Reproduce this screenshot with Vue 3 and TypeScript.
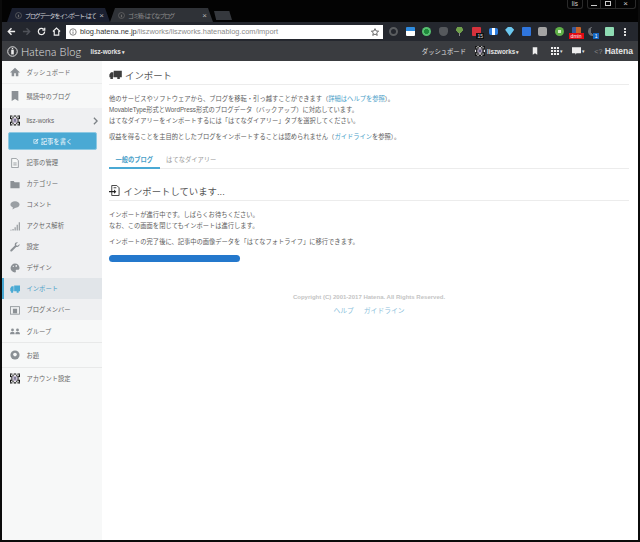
<script setup lang="ts">
const tabs = [
  { title: 'ブログデータをインポート - はて', active: true },
  { title: 'ゴミ箱 - はてなブログ', active: false }
]

const extensions = [
  'ext-sync',
  'ext-blue',
  'ext-green',
  'ext-pocket',
  'ext-tree',
  'ext-red',
  'ext-tag',
  'ext-gem',
  'ext-chart',
  'ext-silver',
  'ext-lime',
  'ext-fox',
  'ext-moon',
  'ext-mint'
]

const blogMenu = [
  { label: '記事の管理', icon: 'doc' },
  { label: 'カテゴリー', icon: 'folder' },
  { label: 'コメント', icon: 'comment' },
  { label: 'アクセス解析', icon: 'bars' },
  { label: '設定', icon: 'wrench' },
  { label: 'デザイン', icon: 'palette' },
  { label: 'インポート', icon: 'truck', active: true },
  { label: 'ブログメンバー', icon: 'member' }
]

// 8x8 pixel art used for the user's avatar
const avatarRows = ['00100100', '01011010', '00233200', '10344301', '10344301', '00233200', '01011010', '00100100']
const avatarColors = ['#141414', '#e8e8e8', '#8a8a8a', '#c9b8d8', '#5a5a7a']
const avatarCells = avatarRows.flatMap((row, y) =>
  row.split('').map((c, x) => ({ x, y, fill: avatarColors[Number(c)] }))
)
</script>

<template>
  <div class="window">
    <svg class="defs">
      <symbol id="avatar" viewBox="0 0 8 8">
        <rect v-for="c in avatarCells" :key="`${c.x}-${c.y}`" :x="c.x" :y="c.y" width="1" height="1" :fill="c.fill" />
      </symbol>
    </svg>

    <div class="tabstrip">
      <div v-for="tab in tabs" :key="tab.title" class="tab" :class="{ active: tab.active }">
        <svg class="tab-favicon" viewBox="0 0 8 8"><circle cx="4" cy="4" r="3.400" fill="none" stroke="#6a6a6a" stroke-width=".8" /><rect x="3.300" y="3" width="1.400" height="3" fill="#6a6a6a" /></svg>
        <span class="tab-title">{{ tab.title }}</span>
        <span class="tab-close">×</span>
      </div>
      <div class="tab-new"></div>
      <div class="win-controls">
        <span class="win-user">lis</span>
        <span class="win-buttons">
          <i class="min"></i>
          <i class="max"></i>
          <i class="close">×</i>
        </span>
      </div>
    </div>

    <div class="toolbar">
      <svg class="nav" viewBox="0 0 10 10"><path d="M9 5H2M5 1.500 1.500 5 5 8.500" fill="none" stroke="#eee" stroke-width="1.600" /></svg>
      <svg class="nav" viewBox="0 0 10 10"><path d="M1 5h7M5 1.500 8.500 5 5 8.500" fill="none" stroke="#50535a" stroke-width="1.600" /></svg>
      <svg class="nav" viewBox="0 0 10 10"><path d="M8.500 5A3.500 3.500 0 1 1 7.400 2.400M8.600 .8v2.600H6" fill="none" stroke="#eee" stroke-width="1.400" /></svg>
      <svg class="nav" viewBox="0 0 10 10"><path d="M1 5 5 1.200 9 5M2.500 4.500V9h5V4.500" fill="none" stroke="#eee" stroke-width="1.300" /></svg>
      <div class="omnibox">
        <svg class="info" viewBox="0 0 10 10"><circle cx="5" cy="5" r="4" fill="none" stroke="#666" /><path d="M5 4.300v3M5 2.500v1" stroke="#666" /></svg>
        <span class="host">blog.hatena.ne.jp</span><span class="path">/liszworks/liszworks.hatenablog.com/import</span>
        <svg class="star" viewBox="0 0 10 10"><path d="M5 .8 6.300 3.700 9.500 4 7.100 6.100 7.800 9.200 5 7.600 2.200 9.200 2.900 6.100.5 4 3.700 3.700z" fill="none" stroke="#444" /></svg>
      </div>
      <div class="extensions">
        <span v-for="ext in extensions" :key="ext" class="ext" :class="ext">
          <b v-if="ext === 'ext-red'">15</b>
          <em v-if="ext === 'ext-fox'">dmin</em>
          <u v-if="ext === 'ext-moon'">1</u>
        </span>
      </div>
      <span class="kebab"></span>
    </div>

    <header class="hatena-bar">
      <div class="brand">
        <svg class="brand-mark" viewBox="0 0 12 12"><circle cx="6" cy="6" r="5.200" fill="none" stroke="#eee" stroke-width="1" /><rect x="4.600" y="4" width="2.800" height="5.200" fill="#eee" /><circle cx="6" cy="2.800" r=".8" fill="#eee" /></svg>
        <span class="brand-name">Hatena Blog</span>
      </div>
      <span class="blog-select">lisz-works<span class="caret">▾</span></span>
      <div class="bar-right">
        <span class="bar-link">ダッシュボード</span>
        <svg class="avatar small"><use href="#avatar" /></svg>
        <span class="bar-user">liszworks<span class="caret">▾</span></span>
        <svg class="bar-icon mark" viewBox="0 0 8 10"><path d="M1 0h6v10L4 8 1 10z" fill="#eee" /></svg>
        <svg class="bar-icon grid" viewBox="0 0 10 10"><path d="M0 0h2.600v2.600H0zM3.700 0h2.600v2.600H3.700zM7.400 0H10v2.600H7.400zM0 3.700h2.600v2.600H0zM3.700 3.700h2.600v2.600H3.700zM7.400 3.700H10v2.600H7.400zM0 7.400h2.600V10H0zM3.700 7.400h2.600V10H3.700zM7.400 7.400H10V10H7.400z" fill="#eee" /></svg>
        <span class="caret">▾</span>
        <svg class="bar-icon chat" viewBox="0 0 12 10"><path d="M0 0h12v8H6L4.500 10V8H0z" fill="#eee" /></svg>
        <span class="caret">▾</span>
        <span class="hatena-word"><small>&lt;?</small> Hatena</span>
      </div>
    </header>

    <div class="body">
      <aside class="sidebar">
        <a class="side-row top">
          <svg class="side-icon" viewBox="0 0 12 12"><path d="M6 1 0 6.500h2V11h3V7.500h2V11h3V6.500h2z" fill="#8b9095" /></svg>
          ダッシュボード
        </a>
        <a class="side-row top reading">
          <svg class="side-icon" viewBox="0 0 12 12"><path d="M2 0h8v12L6 9.600 2 12z" fill="#8b9095" /></svg>
          購読中のブログ
        </a>
        <section class="blog-section">
          <div class="blog-head">
            <svg class="avatar"><use href="#avatar" /></svg>
            <span>lisz-works</span>
            <svg class="chev" viewBox="0 0 6 10"><path d="M1 1l4 4-4 4" fill="none" stroke="#7b8085" stroke-width="1.600" /></svg>
          </div>
          <button class="write-btn">
            <svg viewBox="0 0 10 10"><path d="M1 2h5v1H2v5h5V6h1v3H1zM4 5.500 8.200 1.300l1 1L5 6.500H4z" fill="#fff" /></svg>
            記事を書く
          </button>
          <a v-for="item in blogMenu" :key="item.label" class="side-row" :class="{ active: item.active }">
            <svg class="side-icon" viewBox="0 0 12 12">
              <template v-if="item.icon === 'doc'"><path d="M2 .5h5.500L10 3.200v8.300H2z" fill="#f7f8f8" stroke="#8b9095" /><path d="M4 6h4M4 8.300h4" stroke="#8b9095" /></template>
              <path v-else-if="item.icon === 'folder'" d="M.5 2.500h4l1 1.500h6v7H.5z" fill="#8b9095" />
              <path v-else-if="item.icon === 'comment'" d="M6 1.500c3 0 5.500 1.700 5.500 4s-2.500 4-5.500 4l-3 2 .5-2.600C1.700 8.300.5 7 .5 5.500c0-2.300 2.500-4 5.500-4z" fill="#9a9fa4" />
              <path v-else-if="item.icon === 'bars'" d="M.5 10.500h1.300v1H.5zM3 9.500h1.300v2H3zM5.500 7.500h1.300v4H5.500zM8 4.500h1.300v7H8zM10.500 1.500h1.300v10h-1.300z" fill="#8b9095" />
              <path v-else-if="item.icon === 'wrench'" d="M11.500 2.500 9.300 4.600 7.600 4.200 7.300 2.500 9.400.6C7.700 0 5.800 1.200 5.700 3c0 .5.100.900.200 1.300L.7 9.300c-.6.600-.6 1.300-.1 1.800s1.200.5 1.800 0l5-5.200c2.200.700 4.500-1 4.100-3.400z" fill="#8b9095" />
              <template v-else-if="item.icon === 'palette'"><path d="M6 .7a5.300 5.300 0 1 0 0 10.600c1 0 1.300-.7 1-1.400-.4-.9.100-1.700 1-1.700h1.500c1.200 0 1.900-.8 1.900-2.200C11.400 3 9 .7 6 .7z" fill="#8b9095" /><circle cx="7.500" cy="3.500" r="1" fill="#eff0f2" /><circle cx="4" cy="4" r=".8" fill="#eff0f2" /></template>
              <path v-else-if="item.icon === 'truck'" d="M.3 5 2 2.800h2.400V8.800H.3zM5 1.800h7V8.800H5zM1.300 8.800h2.400v1.700H1.300zM8 8.800h2.400v1.700H8z" fill="#4aaad4" />
              <template v-else><rect x=".5" y="2" width="11" height="9" fill="none" stroke="#8b9095" /><rect x="3.500" y="4.500" width="5" height="5.500" fill="#8b9095" /></template>
            </svg>
            {{ item.label }}
          </a>
        </section>
        <a class="side-row group">
          <svg class="side-icon" viewBox="0 0 12 12"><path d="M3 3a1.700 1.700 0 1 1 0 3.400A1.700 1.700 0 0 1 3 3zM9 3a1.700 1.700 0 1 1 0 3.400A1.700 1.700 0 0 1 9 3zM0 10c0-2 1-3 3-3s2.600 1 2.600 3zM6.400 10c0-2 .6-3 2.600-3s3 1 3 3z" fill="#8b9095" /></svg>
          グループ
        </a>
        <a class="side-row odai">
          <svg class="side-icon" viewBox="0 0 12 12"><circle cx="6" cy="6" r="5.500" fill="#8b9095" /><circle cx="6" cy="5.500" r="2.200" fill="#f7f8f8" /></svg>
          お題
        </a>
        <a class="side-row account">
          <svg class="avatar"><use href="#avatar" /></svg>
          アカウント設定
        </a>
      </aside>

      <main class="content">
        <h1 class="page-title">
          <svg viewBox="0 0 14 10"><path d="M.2 5 2 2.600h2.600V8H.2zM5 .7h9V8H5zM1.300 8h2.800v2H1.300zM9 8h2.800v2H9z" fill="#3d3d3d" /></svg>
          インポート
        </h1>
        <p class="intro first">
          他のサービスやソフトウェアから、ブログを移転・引っ越すことができます（<a>詳細はヘルプを参照</a>）。<br />
          MovableType形式とWordPress形式のブログデータ（バックアップ）に対応しています。<br />
          はてなダイアリーをインポートするには「はてなダイアリー」タブを選択してください。
        </p>
        <p class="intro second">収益を得ることを主目的としたブログをインポートすることは認められません（<a>ガイドライン</a>を参照）。</p>
        <nav class="tabs">
          <span class="tab-item current">一般のブログ</span>
          <span class="tab-item">はてなダイアリー</span>
        </nav>
        <h2 class="section-title">
          <svg viewBox="0 0 12 12"><path d="M3 .5h5.500L11 3v8.500H3z" fill="#fff" stroke="#333" /><path d="M0 6.500h5.500V5L8 7.300 5.500 9.500V8H0z" fill="#222" /><path d="M5 3h3" stroke="#333" /></svg>
          インポートしています...
        </h2>
        <p class="intro status">
          インポートが進行中です。しばらくお待ちください。<br />
          なお、この画面を閉じてもインポートは進行します。
        </p>
        <p class="intro second">インポートの完了後に、記事中の画像データを「はてなフォトライフ」に移行できます。</p>
        <div class="progress"></div>
        <footer class="page-footer">
          <div class="copyright">Copyright (C) 2001-2017 Hatena. All Rights Reserved.</div>
          <div class="footer-links"><a>ヘルプ</a><a>ガイドライン</a></div>
        </footer>
      </main>
    </div>
  </div>
</template>

<style>
html, body {
  margin: 0;
  background: #000;
}
</style>

<style scoped>
.window {
  width: 640px;
  height: 542px;
  box-sizing: border-box;
  border: solid #0b0b0b;
  border-width: 0 2px 2px;
  background: #030303;
  display: flex;
  flex-direction: column;
  overflow: hidden;
  font-family: "Liberation Sans", "Noto Sans CJK JP", sans-serif;
  color: #555;
}

.defs {
  position: absolute;
  width: 0;
  height: 0;
}

.tabstrip {
  height: 22px;
  flex: none;
  padding: 8px 0 0 5px;
  box-sizing: border-box;
  display: flex;
  position: relative;
}

.tab {
  width: 103px;
  height: 14px;
  padding: 0 3px 0 8px;
  box-sizing: border-box;
  display: flex;
  align-items: center;
  gap: 3px;
  clip-path: polygon(0 100%, 5px 0, calc(100% - 5px) 0, 100% 100%);
  background: #2f3237;
  color: #8e8e8e;
  font-size: 6px;
}

.tab.active {
  background: #1b2030;
  color: #d0d0d6;
}

.tab-favicon {
  width: 7px;
  height: 7px;
  flex: none;
}

.tab-title {
  flex: 1;
  white-space: nowrap;
  letter-spacing: -1.100px;
}

.tab-close {
  font-size: 8px;
  color: #b5b5b5;
  margin-right: 3px;
}

.tab-new {
  width: 18px;
  height: 9px;
  margin: 3px 0 0 1px;
  background: #35383d;
  clip-path: polygon(0 0, 85% 0, 100% 100%, 12% 100%);
}

.win-controls {
  position: absolute;
  top: 0;
  right: 2px;
  display: flex;
  gap: 4px;
  height: 9px;
  font-size: 6.500px;
  color: #ccc;
}

.win-user {
  padding: 0 4px;
  border: 1px solid #2a2a2a;
  border-top: 0;
  border-radius: 0 0 3px 3px;
}

.win-buttons {
  display: flex;
  border: 1px solid #2a2a2a;
  border-top: 0;
  border-radius: 0 0 3px 3px;
}

.win-buttons i {
  display: block;
  position: relative;
  font-style: normal;
  text-align: center;
  line-height: 7px;
}

.win-buttons .min {
  width: 12px;
  border-right: 1px solid #2a2a2a;
}

.win-buttons .min::after {
  content: "";
  position: absolute;
  left: 3px;
  top: 5px;
  width: 6px;
  height: 1px;
  background: #ccc;
}

.win-buttons .max {
  width: 14px;
  border-right: 1px solid #2a2a2a;
}

.win-buttons .max::after {
  content: "";
  position: absolute;
  left: 4px;
  top: 1px;
  width: 4px;
  height: 3px;
  border: 1px solid #ccc;
}

.win-buttons .close {
  width: 19px;
  font-size: 8px;
}

.toolbar {
  height: 19px;
  flex: none;
  display: flex;
  align-items: center;
  padding-left: 5px;
  background: #24272e;
}

.nav {
  width: 9px;
  height: 9px;
  margin-right: 6px;
  flex: none;
}

.omnibox {
  width: 317px;
  height: 14px;
  margin-left: -1px;
  flex: none;
  display: flex;
  align-items: center;
  background: #fff;
  font-size: 7.400px;
  color: #8a8a8a;
  white-space: nowrap;
}

.info {
  width: 8px;
  height: 8px;
  margin: 0 3px 0 3px;
}

.host {
  color: #333;
}

.star {
  width: 8px;
  height: 8px;
  margin-left: auto;
  margin-right: 4px;
}

.extensions {
  display: flex;
  gap: 7.600px;
  margin-left: 6px;
}

.ext {
  width: 9px;
  height: 9px;
  position: relative;
  border-radius: 1px;
  box-sizing: border-box;
}

.ext b {
  position: absolute;
  right: -3px;
  bottom: -3px;
  padding: 0 1px;
  background: #111;
  color: #ddd;
  font-size: 5px;
  font-weight: 400;
  line-height: 6px;
}

.ext em {
  position: absolute;
  left: -3px;
  bottom: -3px;
  width: 15px;
  background: #e20a13;
  color: #fff;
  font-size: 5px;
  font-style: normal;
  line-height: 6px;
  text-align: center;
}

.ext u {
  position: absolute;
  right: -2px;
  bottom: -3px;
  width: 6px;
  background: #1567c2;
  color: #fff;
  font-size: 5px;
  text-decoration: none;
  line-height: 6px;
  text-align: center;
}

.ext-sync { border: 2px solid #5a5d60; border-radius: 50%; }
.ext-blue { background: linear-gradient(#2f8ce0 50%, #fff 50%); }
.ext-green { background: radial-gradient(circle, #1f8a3c 35%, #56c070 40%); border-radius: 50%; }
.ext-pocket { background: #55585c; border-radius: 3px 3px 5px 5px; }
.ext-tree { background: radial-gradient(circle at 50% 30%, #6fa04c 40%, transparent 45%), linear-gradient(90deg, transparent 40%, #888 40% 60%, transparent 60%); }
.ext-red { background: #d5323c; }
.ext-tag { background: linear-gradient(90deg, #2f7fe0 35%, #fff 35% 65%, #2f7fe0 65%); border-radius: 2px; height: 7px; margin-top: 1px; }
.ext-gem { background: #6cc8f0; clip-path: polygon(0 30%, 30% 0, 70% 0, 100% 30%, 50% 100%); }
.ext-chart { background: #2f75dd; }
.ext-silver { background: #a3a3a3; border-radius: 2px; }
.ext-lime { background: radial-gradient(circle, #d8f0c8 25%, #5fb048 30%); border-radius: 50%; }
.ext-fox { background: linear-gradient(90deg, #3a5a9a 50%, #c8632a 50%); clip-path: none; }
.ext-moon { background: radial-gradient(circle at 75% 40%, #24272e 45%, #6a6d72 48%); border-radius: 50%; }
.ext-mint { background: #8fdcb4; }

.kebab {
  width: 2px;
  height: 2px;
  margin-left: 10px;
  background: #ddd;
  box-shadow: 0 -3px #ddd, 0 3px #ddd;
}

.hatena-bar {
  height: 20px;
  flex: none;
  display: flex;
  align-items: center;
  padding: 0 5px 0 5px;
  background: #3a3c40;
  color: #e4e4e4;
  font-size: 6.300px;
}

.brand {
  display: flex;
  align-items: center;
  gap: 3px;
}

.brand-mark {
  width: 11px;
  height: 11px;
}

.brand-name {
  font-family: "Lato", "Liberation Sans", sans-serif;
  font-size: 11px;
  font-weight: 300;
  letter-spacing: .2px;
}

.blog-select {
  margin-left: 9px;
  font-weight: 700;
}

.bar-right {
  margin-left: auto;
  display: flex;
  align-items: center;
}

.bar-link {
  margin-right: 9px;
}

.bar-user {
  margin-left: 2px;
  margin-right: 13px;
  font-weight: 700;
}

.bar-icon {
  flex: none;
}

.mark {
  width: 6px;
  height: 8px;
  margin-right: 13px;
}

.grid {
  width: 8px;
  height: 8px;
}

.chat {
  width: 9px;
  height: 8px;
  margin-left: 9px;
}

.caret {
  margin-left: 1px;
  font-size: 5px;
}

.hatena-word {
  margin-left: 9px;
  font-size: 8.500px;
  font-weight: 700;
}

.hatena-word small {
  color: #888;
  font-size: 7px;
  font-weight: 400;
}

.body {
  flex: 1;
  display: flex;
  background: #fff;
  min-height: 0;
}

.sidebar {
  width: 100px;
  flex: none;
  background: #f7f8f8;
  font-size: 6.300px;
  color: #666;
}

.side-row {
  height: 21px;
  display: flex;
  align-items: center;
  gap: 6.500px;
  padding-left: 8px;
  box-sizing: border-box;
}

.side-row.top {
  height: 23px;
  border-bottom: 1px solid #eceded;
}

.side-row.reading {
  height: 24px;
  border-bottom: 0;
}

.side-icon {
  width: 10px;
  height: 10px;
  flex: none;
}

.blog-section {
  background: #eff0f2;
  padding-top: 1px;
}

.blog-head {
  height: 23px;
  display: flex;
  align-items: center;
  gap: 6.500px;
  padding: 0 4px 0 8px;
}

.chev {
  width: 5px;
  height: 8px;
  margin-left: auto;
}

.write-btn {
  width: 89px;
  height: 18px;
  margin: 0 0 2px 6px;
  padding: 0;
  border: 1px solid #8cc8e2;
  border-radius: 2px;
  background: #4aa9d4;
  color: #fff;
  font-family: inherit;
  font-size: 6.300px;
  display: flex;
  align-items: center;
  justify-content: center;
  gap: 2px;
}

.write-btn svg {
  width: 6px;
  height: 6px;
}

.side-row.active {
  border-left: 2px solid #4aa9d4;
  padding-left: 6px;
  background: #e1e5e9;
  color: #4aa0c8;
}

.side-row.group {
  height: 23px;
  border-bottom: 1px solid #e8e9e9;
}

.side-row.odai {
  height: 25px;
  border-bottom: 1px solid #e8e9e9;
}

.side-row.account {
  height: 21px;
}

.avatar {
  width: 10px;
  height: 11px;
  flex: none;
}

.avatar.small {
  height: 10px;
}

.content {
  flex: 1;
  min-width: 0;
  padding: 0 9px 0 7px;
  font-size: 6.270px;
  color: #5c5c5c;
}

.page-title {
  margin: 0;
  height: 24px;
  padding-top: 4px;
  box-sizing: border-box;
  display: flex;
  align-items: center;
  gap: 3px;
  border-bottom: 1px solid #ececec;
  font-size: 9.400px;
  font-weight: 400;
  color: #555;
}

.page-title svg {
  width: 13px;
  height: 9px;
}

.intro {
  margin: 0;
  line-height: 10.800px;
}

.intro.first,
.intro.status {
  padding-top: 9px;
}

.intro.second {
  padding-top: 6px;
}

.intro a,
.footer-links a {
  color: #4aa0c8;
}

.tabs {
  margin-top: 8px;
  height: 17.600px;
  box-sizing: border-box;
  display: flex;
  border-bottom: 1px solid #ececec;
}

.tab-item {
  padding: 4px 6.500px 0;
  color: #999;
}

.tab-item.current {
  box-sizing: border-box;
  height: 17.600px;
  border-bottom: 2px solid #4aa9d4;
  font-weight: 700;
  color: #4aa0c8;
}

.section-title {
  margin: 13px 0 0;
  height: 18px;
  display: flex;
  align-items: center;
  gap: 3.500px;
  border-bottom: 1px solid #ececec;
  font-size: 9.400px;
  font-weight: 400;
  color: #555;
}

.section-title svg {
  width: 11px;
  height: 11px;
}

.progress {
  width: 131px;
  height: 7px;
  margin-top: 7px;
  border-radius: 4px;
  background: #2478cc;
}

.page-footer {
  margin-top: 32px;
  text-align: center;
}

.copyright {
  font-size: 6.030px;
  font-weight: 700;
  color: #c4c4c4;
}

.footer-links {
  margin-top: 5px;
  display: flex;
  justify-content: center;
  gap: 10px;
  font-size: 6.800px;
}

.footer-links a {
  color: #8dbfdc;
}
</style>
